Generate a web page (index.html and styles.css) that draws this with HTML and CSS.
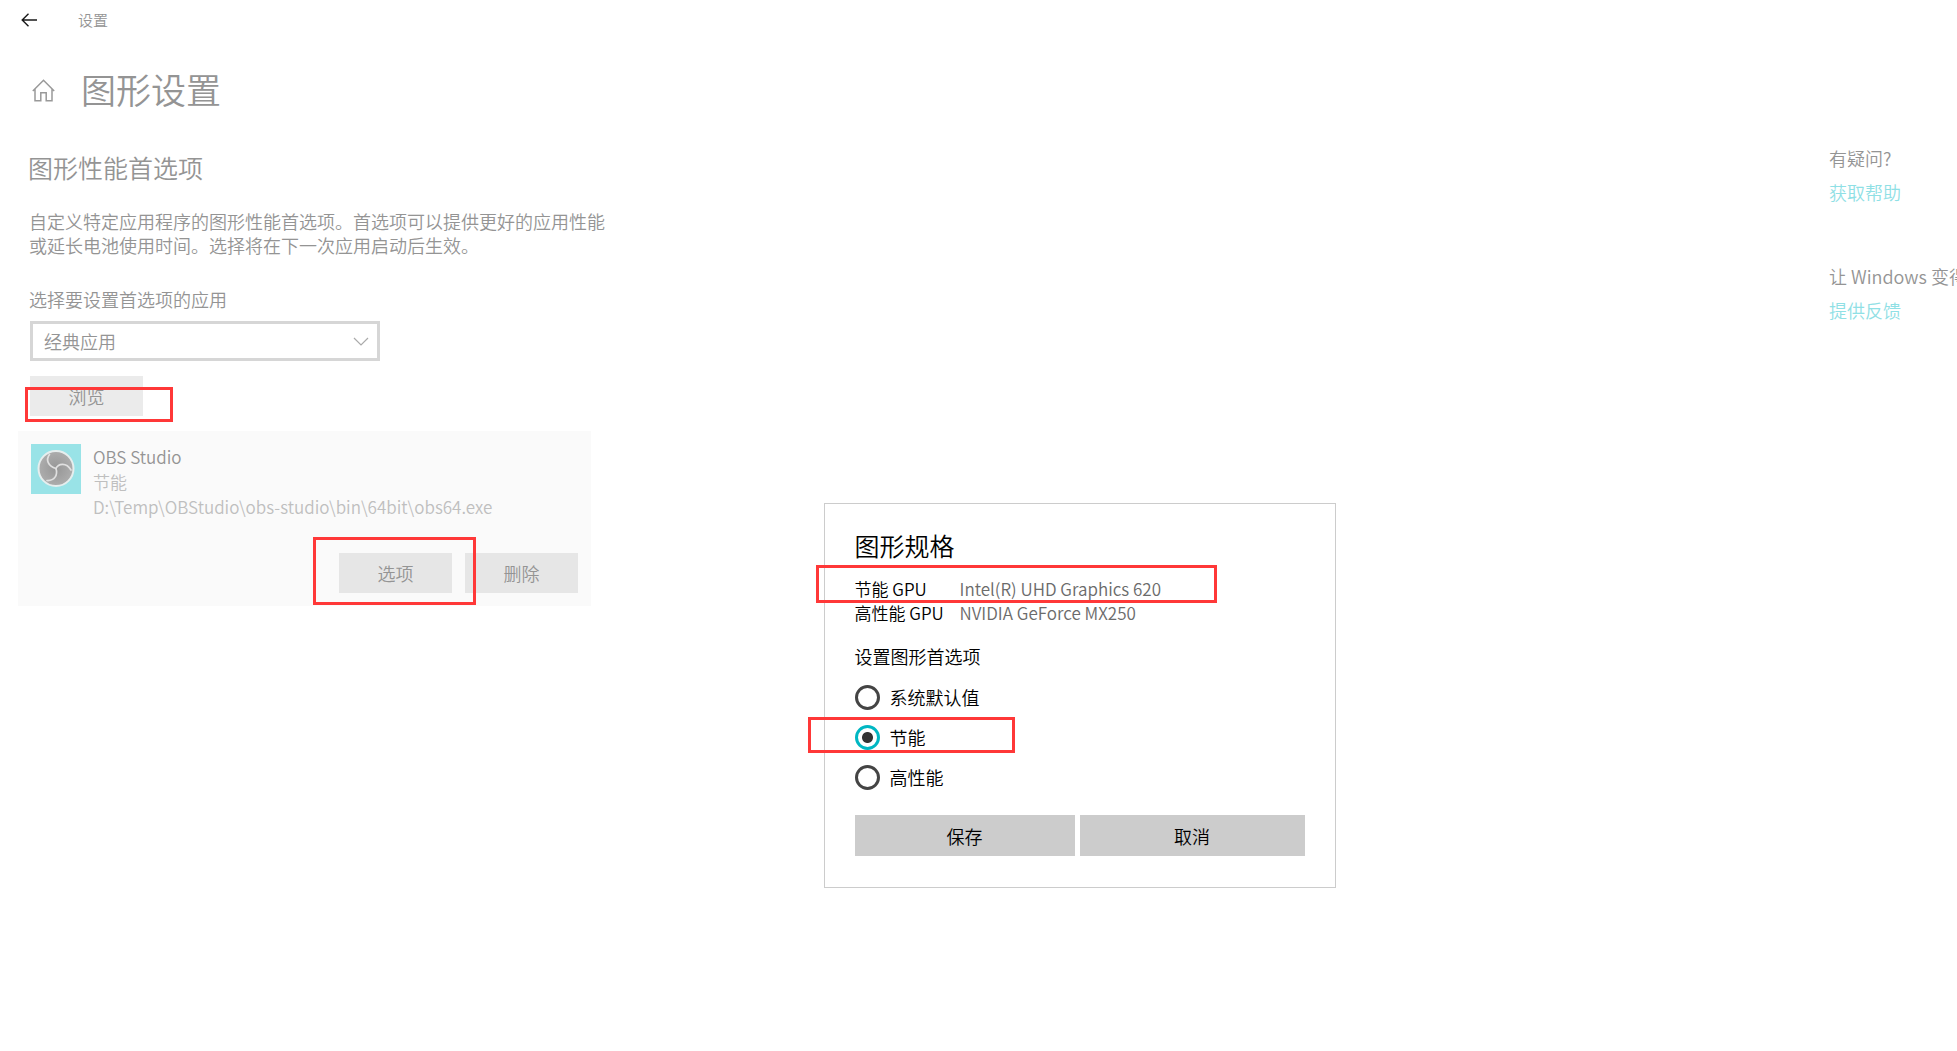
FILE: index.html
```html
<!DOCTYPE html>
<html lang="zh-CN">
<head>
<meta charset="utf-8">
<title>设置</title>
<link rel="stylesheet" href="styles.css">
</head>
<body>
<header class="titlebar">
  <button class="back" type="button" aria-label="返回">
    <svg width="17" height="14" viewBox="0 0 17 14" fill="none" stroke="#1a1a1a" stroke-width="1.4"><path d="M7.5.8 1.2 7l6.300 6.200M1.200 7H16"/></svg>
  </button>
  <span class="app-name">设置</span>
</header>
<div class="page-head">
  <svg class="home" width="23" height="23" viewBox="0 0 23 23" fill="none" stroke="#999" stroke-width="1.500"><path d="M.8 12 11.500 1.300 22.200 12M3 10v11.700h5.800v-8h5.400v8H20V10"/></svg>
  <h1>图形设置</h1>
</div>
<div class="layout">
  <main class="content">
    <h2>图形性能首选项</h2>
    <p class="intro">自定义特定应用程序的图形性能首选项。首选项可以提供更好的应用性能<br>或延长电池使用时间。选择将在下一次应用启动后生效。</p>
    <label class="field-label" for="app-kind">选择要设置首选项的应用</label>
    <div class="select-wrap">
      <select id="app-kind"><option>经典应用</option></select>
      <svg class="chevron" width="16" height="10" viewBox="0 0 16 10" fill="none" stroke="#aaa" stroke-width="1.200"><path d="m1 1 7 7 7-7"/></svg>
    </div>
    <div class="browse-row">
      <button class="btn browse" type="button">浏览</button>
      <span class="mark mark-browse"></span>
    </div>
    <section class="card">
      <div class="app">
        <svg class="app-icon" width="50" height="50" viewBox="0 0 50 50">
          <defs><radialGradient id="disc"><stop offset="0" stop-color="#969696"/><stop offset="1" stop-color="#adadad"/></radialGradient></defs>
          <rect width="50" height="50" fill="#99e3e7"/>
          <circle cx="25" cy="24.500" r="17.500" fill="url(#disc)" stroke="#e6eeee" stroke-width="2"/>
          <g fill="none" stroke="#e0e0e0" stroke-width="1.700" stroke-linecap="round" stroke-linejoin="round">
            <path d="M18.500 10.500C14.500 16 17 22 25 24.500"/>
            <path d="M25 24.500C27 20 35 17.500 40 26"/>
            <path d="M25 24.500C27 31 23.500 37 16 36.500"/>
          </g>
        </svg>
        <div class="app-text">
          <strong>OBS Studio</strong>
          <span>节能</span>
          <span>D:\Temp\OBStudio\obs-studio\bin\64bit\obs64.exe</span>
        </div>
      </div>
      <div class="card-actions">
        <button class="btn" type="button">选项</button>
        <button class="btn" type="button">删除</button>
        <span class="mark mark-options"></span>
      </div>
    </section>
  </main>
  <aside class="help">
    <p>有疑问?</p>
    <a href="#help">获取帮助</a>
    <p class="second">让 Windows 变得更好</p>
    <a href="#feedback">提供反馈</a>
  </aside>
</div>

<form class="dialog" role="dialog" aria-labelledby="dialog-title">
  <h2 id="dialog-title">图形规格</h2>
  <dl class="gpus">
    <dt>节能 GPU</dt><dd>Intel(R) UHD Graphics 620</dd>
    <dt>高性能 GPU</dt><dd>NVIDIA GeForce MX250</dd>
  </dl>
  <fieldset>
    <legend>设置图形首选项</legend>
    <label><input type="radio" name="gpu">系统默认值</label>
    <label><input type="radio" name="gpu" checked>节能</label>
    <label><input type="radio" name="gpu">高性能</label>
  </fieldset>
  <div class="dialog-actions">
    <button type="button">保存</button>
    <button type="button">取消</button>
  </div>
  <span class="mark mark-gpu"></span>
  <span class="mark mark-choice"></span>
</form>
</body>
</html>
```
FILE: styles.css
```css
* { box-sizing: border-box; }
body {
  margin: 0;
  min-height: 100vh;
  position: relative;
  overflow-x: hidden;
  background: #fff;
  color: #949494;
  font: 350 18px/24px "Noto Sans CJK SC", sans-serif;
}
h1, h2, p, dl, dd { margin: 0; font-weight: 350; }
button, select { font: inherit; color: inherit; border: 0; border-radius: 0; padding: 0; }
a { color: #8fe0e5; text-decoration: none; }

.titlebar { display: flex; align-items: center; gap: 40px; height: 40px; padding-left: 21px; }
.back { display: flex; background: none; }
.app-name { font-size: 15px; }
.page-head { display: flex; align-items: center; gap: 26px; height: 100px; padding-left: 32px; }
.page-head h1 { padding-bottom: 2px; font-size: 35px; line-height: 48px; }

.layout { display: flex; justify-content: space-between; }
.content { width: 592px; padding: 10px 0 0 18px; }
.content h2 { padding-left: 10px; font-size: 25px; line-height: 34px; }
.intro { padding: 25px 0 0 11px; white-space: nowrap; }
.field-label { display: block; padding: 30px 0 10px 11px; }
.select-wrap { position: relative; width: 350px; margin-left: 12px; }
.select-wrap select {
  display: block;
  width: 100%;
  height: 40px;
  padding: 0 11px;
  appearance: none;
  background: #fff;
  border: 3px solid #d6d6d6;
}
.chevron { position: absolute; right: 11px; top: 16px; pointer-events: none; }
.browse-row { position: relative; display: flex; padding: 15px 0 15px 12px; }
.btn { width: 113px; height: 40px; background: #e6e6e6; }
.browse { background: #ebebeb; }

.card { padding: 13px; width: 573px; background: #fafafa; }
.app { display: flex; gap: 12px; }
.app-icon { flex: none; }
.app-text { display: flex; flex-direction: column; font-size: 17px; line-height: 25px; white-space: nowrap; color: #bfbfbf; }
.app-text strong { font-weight: 350; color: #949494; }
.card-actions { position: relative; display: flex; justify-content: flex-end; gap: 13px; padding-top: 34px; }

.help { width: 128px; padding-top: 6px; overflow: hidden; white-space: nowrap; }
.help a { display: block; padding-top: 10px; }
.help .second { padding-top: 60px; }

.dialog {
  position: absolute;
  left: calc(50% - 155px);
  top: 503px;
  width: 512px;
  padding: 24px 30px 31px;
  background: #fff;
  border: 1px solid #ccc;
  color: #000;
}
.dialog h2 { font-size: 25px; line-height: 34px; }
.gpus { display: grid; grid-template-columns: 105px 1fr; padding-top: 15px; font-size: 17px; white-space: nowrap; }
.gpus dd { color: #6b6b6b; }
fieldset { margin: 0; padding: 0; border: 0; }
legend { padding: 19px 0 9px; }
fieldset label { display: flex; align-items: center; gap: 10px; height: 40px; }
input[type="radio"] {
  appearance: none;
  width: 25px;
  height: 25px;
  margin: 0;
  border: 3px solid #444;
  border-radius: 50%;
}
input[type="radio"]:checked {
  border-color: #00b7c3;
  background: radial-gradient(circle, #333 5px, transparent 6px);
}
.dialog-actions { display: grid; grid-template-columns: 220px 225px; gap: 5px; padding-top: 18px; }
.dialog-actions button { height: 41px; background: #ccc; }

.mark { position: absolute; border: 3px solid #ff3838; pointer-events: none; }
.mark-browse { left: 7px; top: 26px; width: 148px; height: 35px; }
.mark-options { right: 102px; top: 18px; width: 163px; height: 68px; }
.mark-gpu { left: -9px; top: 61px; width: 401px; height: 38px; }
.mark-choice { left: -17px; top: 213px; width: 207px; height: 36px; }
```
